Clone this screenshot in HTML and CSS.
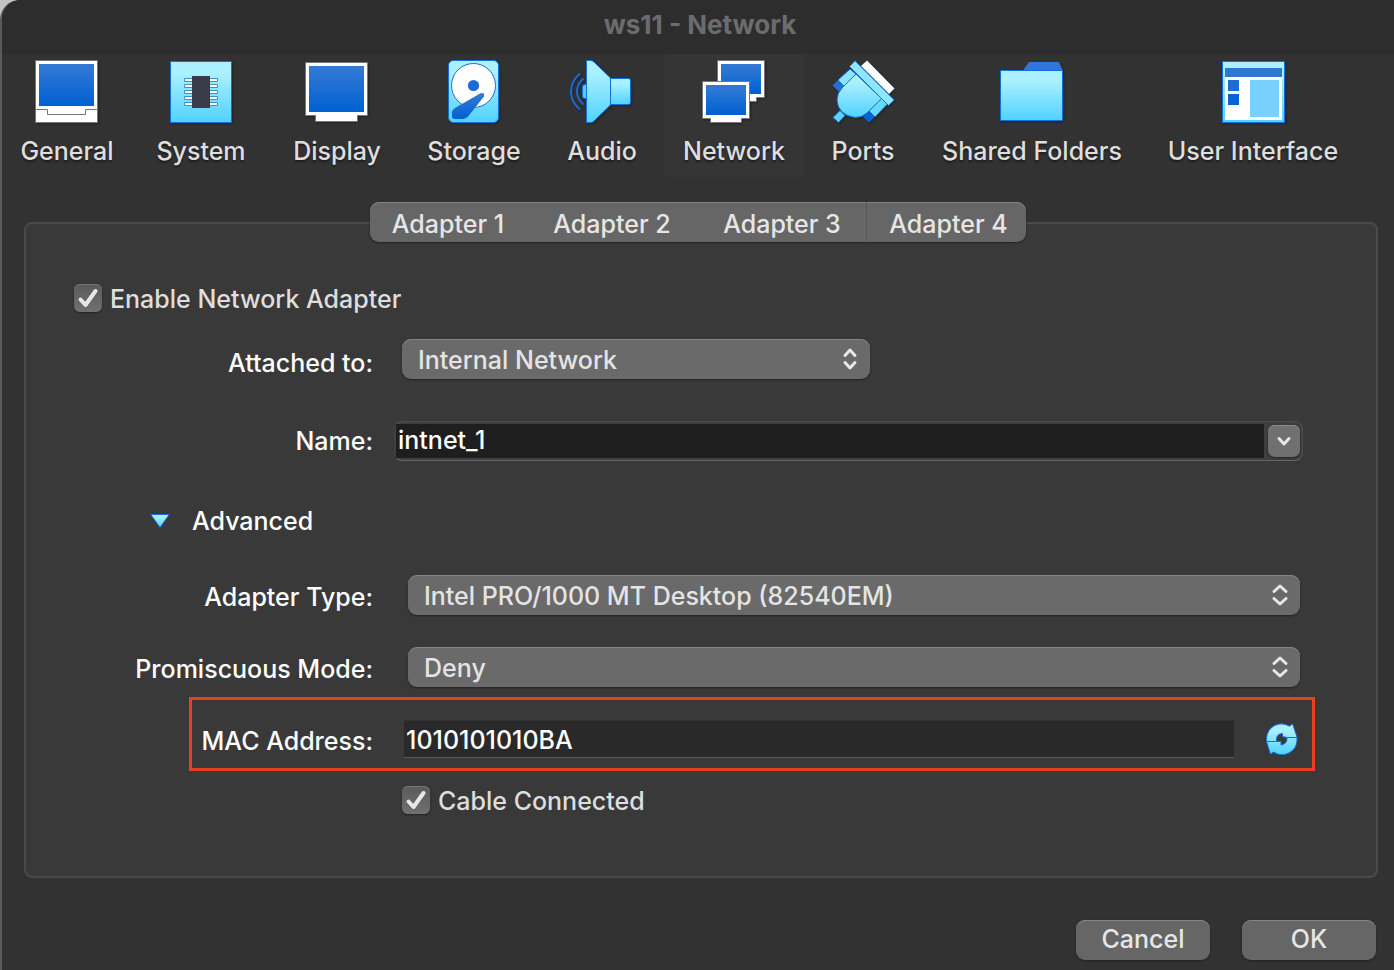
FILE: index.html
```html
<!DOCTYPE html>
<html lang="en">
<head>
<meta charset="utf-8">
<title>ws11 - Network</title>
<link rel="stylesheet" href="styles.css">
</head>
<body>
<svg class="defs" width="0" height="0" aria-hidden="true">
  <defs>
    <linearGradient id="sky" x1="0" y1="0" x2="0" y2="1"><stop offset="0.2" stop-color="#aaf0ff"/><stop offset="1" stop-color="#50d2ff"/></linearGradient>
    <linearGradient id="blue" x1="0" y1="0" x2="0" y2="1"><stop offset="0.1" stop-color="#3078d4"/><stop offset="1" stop-color="#0060d2"/></linearGradient>
  </defs>
</svg>
<div class="window">
  <header class="titlebar"><h1 class="title">ws11 - Network</h1></header>
  <nav class="toolbar" aria-label="Settings">
    <button class="tool" type="button">
      <svg class="tool-icon" viewBox="0 0 64 64" aria-hidden="true"><path d="M.5.5h62v62H.5z" fill="#fff" stroke="#777"/><path d="M4 4h55v42H4z" fill="url(#blue)"/><path d="M1 49.500h11.500v5h38v-5H62" fill="none" stroke="#777"/></svg>
      <span>General</span>
    </button>
    <button class="tool" type="button">
      <svg class="tool-icon" viewBox="0 0 64 64" aria-hidden="true"><path d="M1.500 1.500h61v61h-61z" fill="url(#sky)" stroke="#1070dc"/><path d="M15.500 18.500h33v3h-33zM15.500 24.500h33v3h-33zM15.500 30.500h33v3h-33zM15.500 36.500h33v3h-33zM15.500 42.500h33v3h-33z" fill="#fff" stroke="#3f8fc8"/><path d="M23 16h18v32H23z" fill="#383c48"/></svg>
      <span>System</span>
    </button>
    <button class="tool" type="button">
      <svg class="tool-icon" viewBox="0 0 64 64" aria-hidden="true"><path d="M.5 2.500h62v53h-10v6h-42v-6H.5z" fill="#fff" stroke="#777"/><path d="M4 6h55v46H4z" fill="url(#blue)"/></svg>
      <span>Display</span>
    </button>
    <button class="tool" type="button">
      <svg class="tool-icon" viewBox="0 0 64 64" aria-hidden="true"><rect x="6.500" y=".5" width="50" height="62" rx="5" fill="url(#sky)" stroke="#1070dc"/><circle cx="31.500" cy="25.500" r="22" fill="#fff" stroke="#1c6fd4"/><circle cx="31.500" cy="25.500" r="5.600" fill="#1a6cd4"/><path d="M38 33.500Q43 31.500 42 36.500L26.500 56Q24 59 20 59H13Q10 59 10 56V52Q10 50 13 48Z" fill="url(#blue)"/></svg>
      <span>Storage</span>
    </button>
    <button class="tool" type="button">
      <svg class="tool-icon" viewBox="0 0 64 64" aria-hidden="true"><path d="M17 24.500h-2Q12.500 24.500 12.500 27v9q0 2.500 2.500 2.500h2z" fill="#5cc8ff" stroke="#1070dc"/><path d="M40.500 18.500h18q2 0 2 2v22q0 2-2 2h-18z" fill="url(#sky)" stroke="#1070dc"/><path d="M16.500.5h4q2 0 3.500 1.500L40.500 18v27L24 61q-1.500 1.500-3.500 1.500h-4z" fill="url(#sky)" stroke="#1070dc"/><path d="M10 13.500Q1 21 1 31.500T10 49.500M13.500 18.500Q7 24 7 31.500T13.500 44.500" fill="none" stroke="#1a6cd4" stroke-width="2"/></svg>
      <span>Audio</span>
    </button>
    <button class="tool tool-active" type="button" aria-current="page">
      <svg class="tool-icon" viewBox="0 0 64 64" aria-hidden="true"><path d="M15.500.5h47v37h-8v4h-31v-4h-8z" fill="#fff" stroke="#777"/><path d="M19 4h40v30H19z" fill="url(#blue)"/><path d="M.5 21.500h47v37h-8v4h-31v-4h-8z" fill="#fff" stroke="#777"/><path d="M4 25h40v30H4z" fill="url(#blue)"/></svg>
      <span>Network</span>
    </button>
    <button class="tool" type="button">
      <svg class="tool-icon" viewBox="0 0 64 64" aria-hidden="true"><path d="M30 6L36 .5L63.500 28.500L58 34z" fill="#fff"/><path d="M19 9L25 14L13 26.500L7 20z" fill="#8ce4ff" stroke="#1070dc"/><path d="M50.500 38.500L56.500 44L44 57L37.500 50.500z" fill="#68d8ff" stroke="#1070dc"/><path d="M1.500 25.500L7 20L13 26L8 32z" fill="#246fd4"/><path d="M38 51L44 57L38 62.500L32 57z" fill="#0862d2"/><path d="M9 50.500L14 55.500L7.500 62.500L2 57.500z" fill="#60d4ff" stroke="#1070dc"/><path d="M25 14L11.500 27.500Q6 33 6 40Q7 55 24 57.500Q31 57.500 36 53L50.500 38.500z" fill="url(#sky)" stroke="#1070dc"/><path d="M24 .7L63.300 40L57.500 45.500L18.500 6.500z" fill="#8ee6ff" stroke="#1070dc"/></svg>
      <span>Ports</span>
    </button>
    <button class="tool" type="button">
      <svg class="tool-icon" viewBox="0 0 64 64" aria-hidden="true"><path d="M22.500 11L29 2h30l4 9z" fill="#2f77d4"/><path d="M.5 10.500h62v50H.5z" fill="url(#sky)" stroke="#1070dc"/></svg>
      <span>Shared Folders</span>
    </button>
    <button class="tool" type="button">
      <svg class="tool-icon" viewBox="0 0 64 64" aria-hidden="true"><path d="M1.500 1.500h62v61h-62z" fill="url(#sky)" stroke="#1070dc"/><path d="M4 17h57v43H4z" fill="#fff"/><path d="M4 8h57v9H4z" fill="#2f77d4"/><path d="M7 20h11v11H7z" fill="#1c6cd4"/><path d="M7 34h11v11H7z" fill="#0864d4"/><path d="M29 20h29v37H29z" fill="#78d0ff"/></svg>
      <span>User Interface</span>
    </button>
  </nav>

  <main class="content">
    <div class="tabs" role="tablist">
      <button class="tab" type="button" role="tab" aria-selected="true">Adapter 1</button>
      <button class="tab" type="button" role="tab">Adapter 2</button>
      <button class="tab" type="button" role="tab">Adapter 3</button>
      <button class="tab tab-divided" type="button" role="tab">Adapter 4</button>
    </div>
    <form class="panel">
      <label class="check check-enable"><input class="box" type="checkbox" checked><svg class="tick" viewBox="0 0 28 28" aria-hidden="true"><path d="M6.500 15.500L11.500 21L21.500 7"/></svg><span class="check-text">Enable Network Adapter</span></label>

      <div class="row row-attached">
        <label class="label label-low" for="attached">Attached to:</label>
        <div class="select-wrap select-short">
          <select class="select" id="attached"><option>Internal Network</option></select>
          <svg class="arrows" viewBox="0 0 16 24" aria-hidden="true"><path d="M3 8.500L8 3L13 8.500M3 15.500L8 21L13 15.500"/></svg>
        </div>
      </div>

      <div class="row row-name">
        <label class="label label-middle" for="name">Name:</label>
        <div class="combo">
          <input class="combo-input" id="name" type="text" value="intnet_1">
          <button class="combo-button" type="button" aria-label="Show networks"><svg class="chevron" viewBox="0 0 16 16" aria-hidden="true"><path d="M3 5.500L8 11L13 5.500"/></svg></button>
        </div>
      </div>

      <button class="advanced" type="button" aria-expanded="true"><svg class="triangle" viewBox="0 0 20 16" aria-hidden="true"><path d="M.8 1.500H19.200L10 14.500z" fill="url(#sky)" stroke="#1070dc"/></svg><span>Advanced</span></button>

      <div class="row row-type">
        <label class="label" for="type">Adapter Type:</label>
        <div class="select-wrap">
          <select class="select" id="type"><option>Intel PRO/1000 MT Desktop (82540EM)</option></select>
          <svg class="arrows" viewBox="0 0 16 24" aria-hidden="true"><path d="M2 8.500L8 3L14 8.500M2 15.500L8 21L14 15.500"/></svg>
        </div>
      </div>

      <div class="row row-mode">
        <label class="label" for="mode">Promiscuous Mode:</label>
        <div class="select-wrap">
          <select class="select" id="mode"><option>Deny</option></select>
          <svg class="arrows" viewBox="0 0 16 24" aria-hidden="true"><path d="M2 8.500L8 3L14 8.500M2 15.500L8 21L14 15.500"/></svg>
        </div>
      </div>

      <div class="mac">
        <label class="label" for="mac">MAC Address:</label>
        <input class="mac-input" id="mac" type="text" value="1010101010BA">
        <button class="refresh" type="button" aria-label="Generate a new MAC address"><svg class="refresh-icon" viewBox="0 0 32 32" aria-hidden="true"><path fill-rule="evenodd" d="M.5 18.500V15A15 15 0 0 1 23.500 3.200L26.500.8L31 14V17A15 15 0 0 1 7.500 29L4.500 31.300ZM10.500 18.500Q9.500 11 16.500 10.500V13.500L21 14.500Q21.500 21 15 22V18.500Z" fill="url(#sky)" stroke="#1070dc"/><path d="M.5 18.500H10.500M20.500 14.500H31" stroke="#1070dc"/></svg></button>
      </div>

      <label class="check check-cable"><input class="box" type="checkbox" checked><svg class="tick" viewBox="0 0 28 28" aria-hidden="true"><path d="M6.500 15.500L11.500 21L21.500 7"/></svg><span class="check-text">Cable Connected</span></label>
    </form>
  </main>

  <footer class="footer">
    <button class="button" type="button">Cancel</button>
    <button class="button" type="button">OK</button>
  </footer>
</div>
</body>
</html>
```
FILE: styles.css
```css
* { box-sizing: border-box; }

body {
  margin: 0;
  background: #c4c4c4;
  color: #fff;
  font: 500 25px/32px Inter, "Liberation Sans", sans-serif;
}

button, input, select {
  margin: 0;
  padding: 0;
  border: 0;
  font: inherit;
  color: inherit;
  background: none;
}

.defs { position: absolute; }

.window {
  display: flex;
  flex-direction: column;
  min-height: 100vh;
  border-left: 2px solid #5a5a5a;
  border-top-left-radius: 20px;
  background: #323232;
  overflow: hidden;
}

.titlebar {
  height: 54px;
  background: #2d2d2d;
  text-align: center;
}

.title {
  margin: 0;
  padding: 9px 0 0 4px;
  font-size: 26px;
  line-height: 32px;
  font-weight: 700;
  color: #6c6c6c;
}

.toolbar {
  display: grid;
  grid-template-columns: 130fr 138fr 134fr 140fr 116fr 148fr 110fr 228fr 214fr;
  padding-right: 34px;
}

.tool {
  display: flex;
  flex-direction: column;
  align-items: center;
  gap: 11px;
  min-width: 0;
  margin: 0 4px;
  padding: 6px 0 11px;
  color: #dedede;
  white-space: nowrap;
  text-shadow: 0 2px 2px #1c1c1c;
}

.tool-active { background: #353535; border-radius: 4px; }

.tool-icon {
  width: 64px;
  height: 64px;
  filter: drop-shadow(1px 1px 1px #222);
}

.content {
  display: flex;
  flex-direction: column;
  padding: 24px 16px 0 22px;
}

.tabs {
  display: grid;
  grid-template-columns: 156fr 172fr 168fr 160fr;
  align-self: center;
  width: 656px;
  height: 40px;
  margin: 0 6px -20px 0;
  border-radius: 9px;
  background: #666;
  box-shadow: inset 0 1px #858585, 0 1px 2px #222;
  z-index: 1;
}

.tab { color: #e6e6e6; padding-top: 3px; }
.tab-divided { border-left: 1px solid #595959; padding-left: 4px; }

.panel {
  display: flex;
  flex-direction: column;
  align-items: stretch;
  padding: 60px 61px 62px 0;
  border: 2px solid #4a4a4a;
  border-radius: 8px;
  background: #393939;
}

.check {
  position: relative;
  display: flex;
  align-items: center;
  gap: 8px;
  height: 28px;
  color: #dedede;
}

.check-text { padding-top: 2px; }
.check-enable { margin-left: 48px; }
.check-cable { margin: 15px 0 0 376px; }

.box {
  appearance: none;
  width: 28px;
  height: 28px;
  border-radius: 6px;
  background: linear-gradient(#5a5a5a, #707070);
  box-shadow: inset 0 1px #777, 0 1px 2px #222;
}

.tick {
  position: absolute;
  left: 0;
  top: 0;
  width: 28px;
  height: 28px;
  fill: none;
  stroke: #e8e8e8;
  stroke-width: 4;
  stroke-linecap: round;
  stroke-linejoin: round;
  pointer-events: none;
}

.row { display: flex; align-items: center; min-height: 40px; }
.row .label { flex: 0 0 347px; text-align: right; padding-top: 3px; }
.row .label-low { padding-top: 8px; }
.row .label-middle { padding-top: 0; }

.row-attached { margin-top: 27px; gap: 29px; }
.row-name { margin-top: 42px; gap: 21px; }
.row-type { margin-top: 38px; gap: 35px; }
.row-mode { margin-top: 32px; gap: 35px; }
.row-type, .row-mode { padding-right: 15px; }
.row-name { padding-right: 12px; }

.select-wrap { position: relative; flex: 1; min-width: 0; }
.select-short { flex: 0 1 468px; }

.select {
  display: block;
  appearance: none;
  width: 100%;
  height: 40px;
  padding: 1px 40px 0 16px;
  border-radius: 9px;
  color: #e4e4e4;
  background: #6a6a6a;
  box-shadow: inset 0 1px #858585, 0 1px 2px #222;
}

.arrows {
  position: absolute;
  right: 12px;
  top: 8px;
  width: 16px;
  height: 24px;
  fill: none;
  stroke: #e8e8e8;
  stroke-width: 3;
  stroke-linecap: round;
  stroke-linejoin: round;
  pointer-events: none;
}

.combo {
  display: flex;
  flex: 1;
  align-items: center;
  gap: 4px;
  min-width: 0;
  height: 40px;
  padding-right: 2px;
  border: 1px solid #4e4e4e;
  border-bottom-color: #666;
  border-left-color: #414141;
  border-radius: 8px;
  background: #3f3f3f;
}

.combo-input {
  flex: 1;
  min-width: 0;
  height: 34px;
  margin-left: 1px;
  padding: 0 0 2px 2px;
  background: #1e1e1e;
}

.combo-button {
  display: flex;
  align-items: center;
  justify-content: center;
  width: 32px;
  height: 32px;
  border-radius: 7px;
  background: #707070;
  box-shadow: inset 0 1px #8c8c8c, 0 1px 2px #222;
}

.chevron {
  width: 16px;
  height: 16px;
  fill: none;
  stroke: #e8e8e8;
  stroke-width: 3;
  stroke-linecap: round;
  stroke-linejoin: round;
}

.advanced {
  display: flex;
  align-items: center;
  align-self: flex-start;
  gap: 22px;
  margin: 44px 0 0 124px;
}

.triangle { width: 20px; height: 16px; }

.mac {
  display: flex;
  align-items: center;
  height: 74px;
  margin: 10px 0 0 163px;
  border: 3px solid #e83e26;
}

.mac .label { flex: 0 0 181px; text-align: right; padding-top: 14px; }

.mac-input {
  flex: 1;
  min-width: 0;
  height: 38px;
  margin: 10px 32px 0 31px;
  padding: 2px 0 0 2px;
  border: 1px solid #333;
  border-width: 1px 0;
  border-bottom-color: #5a5a5a;
  background: #292929;
}

.refresh { height: 32px; margin: 10px 14px 0 0; }
.refresh-icon { display: block; width: 32px; height: 32px; }

.footer {
  display: flex;
  justify-content: flex-end;
  gap: 32px;
  padding: 42px 18px 10px;
}

.button {
  width: 134px;
  height: 40px;
  padding-bottom: 2px;
  border-radius: 9px;
  color: #e6e6e6;
  background: #666;
  box-shadow: inset 0 1px #858585, 0 1px 2px #222;
}
```
